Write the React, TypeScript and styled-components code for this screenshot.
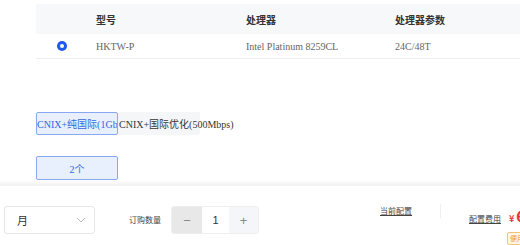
import styled, { createGlobalStyle } from 'styled-components';

const serif = `'Liberation Serif', 'DejaVu Serif', serif, 'Noto Sans CJK SC'`;
const sans = `'Noto Sans CJK SC', sans-serif`;

const GlobalStyle = createGlobalStyle`
    body {
        margin: 0;
        background: #ffffff;
        font-family: ${serif};
        color: #333333;
        overflow: hidden;
    }
`;

const Page = styled.div`
    width: 520px;
    height: 245px;
    display: flex;
    flex-direction: column;
    overflow: hidden;
`;

const Content = styled.div`
    height: 180px;
    padding: 4px 0 0 36px;
    box-sizing: border-box;
`;

const Table = styled.table`
    width: 520px;
    border-collapse: collapse;
    font-size: 10px;
    font-family: ${serif};
    table-layout: fixed;
`;

const HeadCell = styled.th`
    height: 30px;
    padding: 0;
    background: #f7f8fa;
    text-align: left;
    font-family: ${sans};
    font-weight: 700;
    color: #333333;
`;

const Cell = styled.td`
    height: 24px;
    padding: 0;
    color: #666666;
    font-family: ${serif};
    border-bottom: 1px solid #ebeef2;
`;

const Radio = styled.span`
    display: block;
    width: 10px;
    height: 10px;
    margin-left: 21px;
    border-radius: 50%;
    background: #1f5ae8;
    position: relative;
    &::after {
        content: '';
        position: absolute;
        left: 3px;
        top: 3px;
        width: 4px;
        height: 4px;
        border-radius: 50%;
        background: #ffffff;
    }
`;

const TabRow = styled.div`
    display: flex;
    margin-top: 53px;
    height: 23px;
`;

const Tab = styled.div<{ $active?: boolean }>`
    width: 82px;
    flex-shrink: 0;
    box-sizing: border-box;
    display: flex;
    align-items: center;
    white-space: nowrap;
    overflow: ${(p) => (p.$active ? 'hidden' : 'visible')};
    font-size: 10px;
    font-family: ${serif};
    border-radius: 2px;
    border: 1px solid ${(p) => (p.$active ? '#8aa8f2' : 'transparent')};
    background: ${(p) => (p.$active ? '#e8f0fe' : '#f5f6f8')};
    color: ${(p) => (p.$active ? '#3466e0' : '#333333')};
    position: relative;
    z-index: ${(p) => (p.$active ? 1 : 0)};
`;

const CountButton = styled.div`
    width: 82px;
    height: 24px;
    margin-top: 21px;
    box-sizing: border-box;
    border: 1px solid #8aa8f2;
    border-radius: 2px;
    background: #e8f0fe;
    color: #3466e0;
    font-size: 10px;
    font-family: ${serif};
    display: flex;
    align-items: center;
    justify-content: center;
`;

const Shade = styled.div`
    height: 10px;
    background: linear-gradient(#ffffff, #f0f0f0);
`;

const Bar = styled.div`
    flex: 1;
    display: flex;
    align-items: flex-start;
    padding: 20px 0 0 4px;
    font-family: ${sans};
    & > * {
        flex-shrink: 0;
    }
`;

const Select = styled.div`
    width: 91px;
    height: 28px;
    box-sizing: border-box;
    border: 1px solid #e6e6e6;
    border-radius: 3px;
    display: flex;
    align-items: center;
    justify-content: space-between;
    padding: 0 8px 0 12px;
    font-size: 11px;
    color: #333333;
`;

const Label = styled.span`
    font-size: 8px;
    color: #444444;
    margin: 0 10px 0 34px;
    line-height: 28px;
    white-space: nowrap;
`;

const Stepper = styled.div`
    display: flex;
    height: 28px;
    border-radius: 3px;
    overflow: hidden;
    border: 1px solid #eeeeee;
    box-sizing: border-box;
`;

const StepButton = styled.div<{ $bg: string; $w: number }>`
    width: ${(p) => p.$w}px;
    background: ${(p) => p.$bg};
    display: flex;
    align-items: center;
    justify-content: center;
    font-size: 13px;
    color: #888888;
    font-family: 'Liberation Sans', sans-serif;
`;

const StepValue = styled.div`
    width: 27px;
    display: flex;
    align-items: center;
    justify-content: center;
    font-size: 11px;
    color: #333333;
    font-family: 'Liberation Sans', sans-serif;
`;

const LinkText = styled.span`
    font-size: 8px;
    color: #444444;
    text-decoration: underline;
    line-height: 10px;
    white-space: nowrap;
`;

const Spacer = styled.div`
    width: 121px;
`;

const Divider = styled.div`
    width: 1px;
    height: 14px;
    background: #f0f0f0;
    margin: -2px 28px 0 28px;
`;

const Fee = styled.div`
    display: flex;
    flex-direction: column;
    align-items: flex-start;
`;

const FeeTop = styled.div`
    display: flex;
    align-items: baseline;
    white-space: nowrap;
`;

const Price = styled.span`
    color: #e4393c;
    font-weight: 700;
    font-size: 9px;
    margin-left: 8px;
    & b {
        font-size: 14px;
        margin-left: 2px;
    }
`;

const Badge = styled.span`
    margin: 6px 0 0 38px;
    font-size: 7px;
    line-height: 11px;
    padding: 0 2px;
    border: 1px solid #f5c27a;
    background: #fff6e8;
    color: #f09a28;
    border-radius: 2px;
    white-space: nowrap;
`;

export default function App() {
    return (
        <Page>
            <GlobalStyle />
            <Content>
                <Table>
                    <colgroup>
                        <col style={{ width: 60 }} />
                        <col style={{ width: 150 }} />
                        <col style={{ width: 149 }} />
                        <col />
                    </colgroup>
                    <thead>
                        <tr>
                            <HeadCell />
                            <HeadCell>型号</HeadCell>
                            <HeadCell>处理器</HeadCell>
                            <HeadCell>处理器参数</HeadCell>
                        </tr>
                    </thead>
                    <tbody>
                        <tr>
                            <Cell>
                                <Radio />
                            </Cell>
                            <Cell>HKTW-P</Cell>
                            <Cell>Intel Platinum 8259CL</Cell>
                            <Cell>24C/48T</Cell>
                        </tr>
                    </tbody>
                </Table>
                <TabRow>
                    <Tab $active>CNIX+纯国际(1Gbps)</Tab>
                    <Tab>CNIX+国际优化(500Mbps)</Tab>
                </TabRow>
                <CountButton>2个</CountButton>
            </Content>
            <Shade />
            <Bar>
                <Select>
                    <span>月</span>
                    <svg width="10" height="6" viewBox="0 0 10 6">
                        <path d="M1 1l4 4 4-4" fill="none" stroke="#bbbbbb" strokeWidth="1" />
                    </svg>
                </Select>
                <Label>订购数量</Label>
                <Stepper>
                    <StepButton $bg="#e8e8e8" $w={30}>−</StepButton>
                    <StepValue>1</StepValue>
                    <StepButton $bg="#f5f6fa" $w={29}>+</StepButton>
                </Stepper>
                <Spacer />
                <LinkText>当前配置</LinkText>
                <Divider />
                <Fee>
                    <FeeTop>
                        <LinkText>配置费用</LinkText>
                        <Price>
                            ¥<b>6</b>
                        </Price>
                    </FeeTop>
                    <Badge>便用优惠</Badge>
                </Fee>
            </Bar>
        </Page>
    );
}
